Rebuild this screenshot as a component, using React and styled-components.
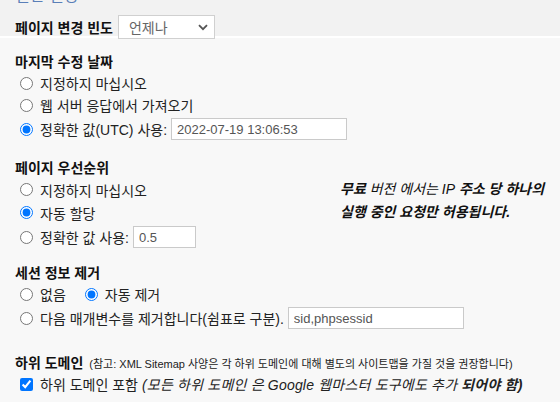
import React from "react";
import styled, { createGlobalStyle } from "styled-components";

const GlobalStyle = createGlobalStyle`
  body {
    margin: 0;
    background: #f8f8f8;
    font-family: "Liberation Sans", "Noto Sans CJK KR", sans-serif;
    font-size: 14px;
    color: #222;
  }
`;

const Page = styled.div`
  width: 560px;
  height: 402px;
  overflow: hidden;
`;

const TopBand = styled.div`
  display: flow-root;
  background: #f2f2f2;
  border-bottom: 2px solid #fff;
  height: 36px;
  padding: 0 15px;
`;

const CutTitle = styled.div`
  margin-top: -14px;
  height: 20px;
  line-height: 20px;
  font-size: 16px;
  color: #5a7fb8;
`;

const FieldRow = styled.div`
  display: flex;
  align-items: center;
  gap: 5px;
  margin-top: 9px;
`;

const FieldLabel = styled.span`
  font-weight: bold;
  font-size: 14px;
  color: #111;
`;

const SelectBox = styled.div`
  width: 97px;
  height: 24px;
  box-sizing: border-box;
  border: 1px solid #d0d0d0;
  background: #fff;
  display: flex;
  align-items: center;
  justify-content: space-between;
  padding: 0 6px 0 10px;
  color: #666;
  font-size: 14px;
`;

const Section = styled.section`
  padding: 0 15px;
  margin-top: ${(p) => p.$top}px;
`;

const SectionTitle = styled.div`
  font-weight: bold;
  font-size: 14px;
  color: #111;
  height: 20px;
  line-height: 20px;
  white-space: nowrap;
`;

const SmallNote = styled.span`
  font-weight: normal;
  font-size: 11px;
  color: #222;
  margin-left: 6px;
`;

const Option = styled.label`
  display: flex;
  align-items: center;
  min-height: ${(p) => (p.$tall ? 26 : p.$h || 22)}px;
  white-space: nowrap;
`;

const OptionLine = styled.div`
  display: flex;
  align-items: center;
  gap: 14px;
  min-height: 22px;
`;

const Radio = styled.input.attrs({ type: "radio" })`
  width: 13px;
  height: 13px;
  margin: 0 7px 0 5px;
`;

const Check = styled.input.attrs({ type: "checkbox" })`
  width: 13px;
  height: 13px;
  margin: 0 7px 0 5px;
`;

const TextInput = styled.input`
  width: ${(p) => p.$w}px;
  height: 22px;
  box-sizing: border-box;
  border: 1px solid #cacaca;
  background: #fff;
  margin-left: 4px;
  padding: 0 5px;
  font-family: "Liberation Sans", "Noto Sans CJK KR", sans-serif;
  font-size: 13px;
  color: #555;
  outline: none;
`;

const TwoCol = styled.div`
  display: grid;
  grid-template-columns: 325px 1fr;
`;

const Note = styled.div`
  font-style: italic;
  font-weight: bold;
  line-height: 23px;
  color: #111;
  white-space: nowrap;
`;

const Thin = styled.span`
  font-weight: normal;
`;

const Em = styled.em`
  font-style: italic;
  margin-left: 4px;
  letter-spacing: 0.2px;
  font-weight: ${(p) => (p.$bold ? "bold" : "normal")};
`;

const Chevron = () => (
  <svg width="10" height="7" viewBox="0 0 10 7">
    <path d="M1 1.2 L5 5.2 L9 1.2" fill="none" stroke="#555" strokeWidth="1.8" />
  </svg>
);

export default function App() {
  return (
    <Page>
      <GlobalStyle />
      <TopBand>
        <CutTitle>일반 설정</CutTitle>
        <FieldRow>
          <FieldLabel>페이지 변경 빈도</FieldLabel>
          <SelectBox>
            <span>언제나</span>
            <Chevron />
          </SelectBox>
        </FieldRow>
      </TopBand>

      <Section $top={14}>
        <SectionTitle>마지막 수정 날짜</SectionTitle>
        <Option><Radio name="lastmod" />지정하지 마십시오</Option>
        <Option><Radio name="lastmod" />웹 서버 응답에서 가져오기</Option>
        <Option $tall>
          <Radio name="lastmod" defaultChecked />정확한 값(UTC) 사용:
          <TextInput $w={176} defaultValue="2022-07-19 13:06:53" />
        </Option>
      </Section>

      <Section $top={16}>
        <SectionTitle>페이지 우선순위</SectionTitle>
        <TwoCol>
          <div>
            <Option $h={23}><Radio name="prio" />지정하지 마십시오</Option>
            <Option $h={23}><Radio name="prio" defaultChecked />자동 할당</Option>
            <Option $tall>
              <Radio name="prio" />정확한 값 사용:
              <TextInput $w={63} defaultValue="0.5" />
            </Option>
          </div>
          <Note>
            무료 <Thin>버전 에서는 IP</Thin> 주소 당 하나의
            <br />
            실행 중인 요청만 허용됩니다.
          </Note>
        </TwoCol>
      </Section>

      <Section $top={13}>
        <SectionTitle>세션 정보 제거</SectionTitle>
        <OptionLine>
          <Option><Radio name="sess" />없음</Option>
          <Option><Radio name="sess" defaultChecked />자동 제거</Option>
        </OptionLine>
        <Option $tall>
          <Radio name="sess" />다음 매개변수를 제거합니다(쉼표로 구분).
          <TextInput $w={176} defaultValue="sid,phpsessid" />
        </Option>
      </Section>

      <Section $top={22}>
        <SectionTitle>
          하위 도메인
          <SmallNote>(참고: XML Sitemap 사양은 각 하위 도메인에 대해 별도의 사이트맵을 가질 것을 권장합니다)</SmallNote>
        </SectionTitle>
        <Option>
          <Check defaultChecked />하위 도메인 포함
          <Em>(모든 하위 도메인 은 Google 웹마스터 도구에도 추가</Em>
          <Em $bold>되어야 함)</Em>
        </Option>
      </Section>
    </Page>
  );
}
